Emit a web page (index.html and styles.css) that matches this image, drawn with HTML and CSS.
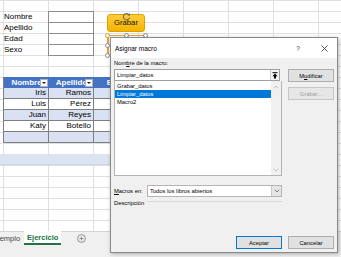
FILE: index.html
```html
<!DOCTYPE html>
<html lang="es">
<head>
  <meta charset="UTF-8" />
  <title>Asignar macro</title>
  <link rel="stylesheet" href="styles.css">
</head>
<body>
  <div class="app">
    <div class="sheet">
      <div class="form">
        <div class="label">Nombre</div><div class="box"></div>
        <div class="label">Apellido</div><div class="box"></div>
        <div class="label">Edad</div><div class="box"></div>
        <div class="label">Sexo</div><div class="box"></div>
      </div>

      <div class="table">
        <div class="th">Nombre<span class="filter"></span></div>
        <div class="th">Apellido<span class="filter"></span></div>
        <div class="th">Edad<span class="filter"></span></div>

        <div class="td band">Iris</div><div class="td band">Ramos</div><div class="td band"></div>
        <div class="td">Luis</div><div class="td">Pérez</div><div class="td"></div>
        <div class="td band">Juan</div><div class="td band">Reyes</div><div class="td band"></div>
        <div class="td">Katy</div><div class="td">Botello</div><div class="td"></div>
        <div class="td band"></div><div class="td band"></div><div class="td band"></div>
      </div>

      <div class="highlight-row"></div>
    </div>

    <div class="tabs">
      <div class="tab first">Ejemplo</div>
      <div class="tab active">Ejercicio</div>
      <div class="add-sheet">
        <svg width="9" height="9" viewBox="0 0 9 9">
          <circle cx="4.5" cy="4.5" r="3.9" fill="none" stroke="#7a7a7a" stroke-width="0.8"/>
          <path d="M4.5 2.5v4M2.5 4.5h4" stroke="#7a7a7a" stroke-width="0.8"/>
        </svg>
      </div>
    </div>
    <div class="status"></div>

    <!-- shapes on the sheet -->
    <div class="shape grabar">Grabar</div>
    <div class="selection">
      <span class="handle h1"></span>
      <span class="handle h2"></span>
      <span class="handle h3"></span>
      <span class="handle h4"></span>
      <span class="handle h5"></span>
    </div>
    <svg class="rotate" width="9" height="9" viewBox="0 0 9 9">
      <path d="M7.4 3.2A3.2 3.2 0 1 0 7.6 5.6" fill="none" stroke="#6d6d6d" stroke-width="1.1"/>
      <path d="M8.2 1.2 7.8 4 5.3 3z" fill="#6d6d6d"/>
    </svg>

    <div class="dialog">
      <div class="titlebar">
        <span class="title">Asignar macro</span>
        <span class="tb-btn">?</span>
        <span class="tb-btn">
          <svg width="7" height="7" viewBox="0 0 7 7">
            <path d="M0.5 0.5l6 6M6.5 0.5l-6 6" stroke="#333" stroke-width="0.8"/>
          </svg>
        </span>
      </div>

      <div class="dlg-body">
        <div class="dlg-main">
          <div class="field-label">Nom<u>b</u>re de la macro:</div>
          <div class="name-box">
            <span class="name-text">Limpiar_datos</span>
            <span class="collapse">
              <svg width="6" height="7" viewBox="0 0 6 7">
                <path d="M0.5 0.7h5" stroke="#000" stroke-width="1"/>
                <path d="M3 1.4 5.6 4.2H4V6.6H2V4.2H0.4z" fill="#000"/>
              </svg>
            </span>
          </div>
          <div class="list">
            <div class="items">
              <div class="item">Grabar_datos</div>
              <div class="item selected">Limpiar_datos</div>
              <div class="item">Macro2</div>
            </div>
            <div class="scroll">
              <svg width="6" height="4" viewBox="0 0 6 4"><path d="M0.8 3.2 3 1 5.2 3.2" fill="none" stroke="#b5b5b5" stroke-width="0.8"/></svg>
              <svg width="6" height="4" viewBox="0 0 6 4"><path d="M0.8 0.8 3 3 5.2 0.8" fill="none" stroke="#b5b5b5" stroke-width="0.8"/></svg>
            </div>
          </div>

          <div class="combo-row">
            <span class="combo-label"><u>M</u>acros en:</span>
            <div class="combo">
              <span class="combo-text">Todos los libros abiertos</span>
              <span class="combo-arrow">
                <svg width="6" height="4" viewBox="0 0 6 4"><path d="M0.8 0.8 3 3 5.2 0.8" fill="none" stroke="#606060" stroke-width="0.8"/></svg>
              </span>
            </div>
          </div>

          <div class="desc-row">
            <span>Descripción</span>
            <span class="rule"></span>
          </div>
        </div>

        <div class="dlg-side">
          <button class="btn">M<u>o</u>dificar</button>
          <button class="btn" disabled>Grabar...</button>
        </div>
      </div>

      <div class="dlg-footer">
        <button class="btn default">Aceptar</button>
        <button class="btn">Cancelar</button>
      </div>
    </div>
  </div>
</body>
</html>
```

FILE: styles.css
```css
html, body {
  margin: 0;
  padding: 0;
  background: #fff;
}

.app {
  position: relative;
  width: 341px;
  height: 257px;
  overflow: hidden;
  font-family: 'Liberation Sans', Arial, sans-serif;
}

/* ---------- worksheet ---------- */

.sheet {
  display: grid;
  grid-template-columns: 3px repeat(7, 45px);
  grid-template-rows: repeat(21, 11px);
  height: 231px;
  background-color: #fff;
  background-image:
    linear-gradient(to right, #e0e0e0 1px, transparent 1px),
    linear-gradient(to bottom, #e0e0e0 1px, transparent 1px);
  background-size: 45px 11px;
  background-position: 3px 0, 0 0;
  font-size: 8px;
  color: #000;
}

.form {
  grid-column: 2 / span 2;
  grid-row: 2 / span 4;
  display: grid;
  grid-template-columns: 45px 45px;
  grid-auto-rows: 11px;
}

.form .label {
  padding-left: 1px;
  line-height: 11px;
}

.form .box {
  border: 1px solid #8c8c8c;
  margin-bottom: -1px;
  margin-right: -1px;
}

.table {
  grid-column: 2 / span 3;
  grid-row: 8 / span 6;
  justify-self: start;
  display: grid;
  grid-template-columns: repeat(3, 45px);
  grid-auto-rows: 11px;
  border-left: 1px solid #7f7f7f;
}

.th {
  position: relative;
  background: #4472c4;
  color: #fff;
  font-weight: bold;
  line-height: 11px;
  text-align: center;
  white-space: nowrap;
  overflow: hidden;
}

.filter {
  position: absolute;
  right: 1px;
  top: 2px;
  width: 6px;
  height: 6px;
  background: #fff;
  border: 1px solid #b0b0b0;
}

.filter::after {
  content: "";
  position: absolute;
  left: 1px;
  top: 2px;
  border-left: 2px solid transparent;
  border-right: 2px solid transparent;
  border-top: 2px solid #222;
}

.td {
  background: #fff;
  border-right: 1px solid #7f7f7f;
  border-bottom: 1px solid #7f7f7f;
  text-align: right;
  padding-right: 2px;
  line-height: 10px;
}

.td.band {
  background: #d9e1f2;
}

.highlight-row {
  grid-column: 1 / -1;
  grid-row: 15;
  background: #dce4f2;
  border-bottom: 1px solid #c9d5ea;
}

/* ---------- sheet tabs ---------- */

.tabs {
  display: flex;
  height: 14px;
  background: #f0f0f0;
  border-top: 1px solid #d4d4d4;
  box-sizing: border-box;
  font-size: 7.5px;
}

.tab {
  display: flex;
  align-items: center;
  padding: 0 4px;
  color: #444;
  white-space: nowrap;
}

.tab.first {
  margin-left: -11px;
}

.tab.active {
  margin-top: -1px;
  padding: 0 3px;
  background: #fff;
  color: #217346;
  font-weight: bold;
  border-bottom: 2px solid #217346;
}

.add-sheet {
  display: flex;
  align-items: center;
  margin-left: 16px;
}

.status {
  height: 12px;
  background: #f0f0f0;
}

/* ---------- shapes ---------- */

.shape {
  position: absolute;
  box-sizing: border-box;
  border-radius: 3px;
  border: 1px solid #d9a200;
  background: linear-gradient(#ffcd3a, #f4b400);
}

.grabar {
  left: 107px;
  top: 14px;
  width: 38px;
  height: 18px;
  font-size: 7.7px;
  line-height: 16px;
  text-align: center;
  color: #111;
}

.selection {
  position: absolute;
  left: 107px;
  top: 35px;
  width: 38px;
  height: 20px;
  border-top: 1px solid #e6a33a;
  border-left: 2px solid #e6a33a;
  box-sizing: border-box;
}

.handle {
  position: absolute;
  width: 5px;
  height: 5px;
  border-radius: 50%;
  border: 1px solid #8a8a8a;
  background: #fff;
  box-sizing: border-box;
}

.h1 { left: -4px; top: -3px; border-color: #d99a2b; }
.h2 { left: 15px; top: -3px; }
.h3 { left: 34px; top: -3px; }
.h4 { left: -4px; top: 7px; }
.h5 { left: -4px; top: 17px; }

.rotate {
  position: absolute;
  left: 122px;
  top: 12px;
}

/* ---------- dialog ---------- */

.dialog {
  position: absolute;
  left: 110px;
  top: 37px;
  width: 228px;
  height: 216px;
  box-sizing: border-box;
  display: flex;
  flex-direction: column;
  background: #f0f0f0;
  border: 1px solid #8a8a8a;
  box-shadow: 1px 1px 4px rgba(0, 0, 0, 0.3);
  font-size: 5.8px;
  color: #000;
}

.titlebar {
  display: flex;
  align-items: center;
  height: 20px;
  background: #fff;
}

.title {
  flex: 1;
  padding-left: 4px;
  font-size: 6.5px;
}

.tb-btn {
  width: 26px;
  display: flex;
  justify-content: center;
  align-items: center;
  font-size: 6.5px;
  color: #333;
}

.dlg-body {
  display: grid;
  grid-template-columns: 168px 46px;
  column-gap: 6px;
  padding: 2px 3px 0;
}

.field-label {
  line-height: 7px;
}

.name-box {
  display: flex;
  align-items: stretch;
  width: 166px;
  height: 12px;
  margin-top: 2px;
  box-sizing: border-box;
  background: #fff;
  border: 1px solid #a0a0a0;
}

.name-text {
  flex: 1;
  padding-left: 2px;
  line-height: 10px;
}

.collapse {
  width: 8px;
  display: flex;
  justify-content: center;
  align-items: center;
  border-left: 1px solid #c8c8c8;
  background: #f4f4f4;
}

.list {
  display: flex;
  height: 95px;
  box-sizing: border-box;
  background: #fff;
  border: 1px solid #b4b4b4;
  border-top: none;
}

.items {
  flex: 1;
  padding-top: 1px;
}

.item {
  line-height: 8px;
  padding-left: 2px;
  white-space: nowrap;
}

.item.selected {
  background: #0078d7;
  color: #fff;
}

.scroll {
  width: 10px;
  display: flex;
  flex-direction: column;
  justify-content: space-between;
  align-items: center;
  padding: 4px 0 3px;
  background: #f0f0f0;
}

.combo-row {
  display: flex;
  align-items: center;
  margin-top: 9px;
}

.combo-label {
  width: 33px;
}

.combo {
  flex: 1;
  display: flex;
  height: 12px;
  box-sizing: border-box;
  background: #fff;
  border: 1px solid #b4b4b4;
}

.combo-text {
  flex: 1;
  padding-left: 2px;
  line-height: 10px;
}

.combo-arrow {
  width: 9px;
  display: flex;
  justify-content: center;
  align-items: center;
  background: #e5e5e5;
  border-left: 1px solid #c8c8c8;
}

.desc-row {
  display: flex;
  align-items: center;
  height: 9px;
  margin-top: 1px;
}

.rule {
  flex: 1;
  height: 1px;
  margin-left: 3px;
  margin-top: -2px;
  background: #d9d9d9;
}

.dlg-side {
  display: flex;
  flex-direction: column;
  gap: 5px;
  padding-top: 9px;
}

.btn {
  width: 46px;
  height: 13px;
  padding: 0;
  margin: 0;
  box-sizing: border-box;
  background: #e1e1e1;
  border: 1px solid #adadad;
  border-radius: 0;
  font-family: inherit;
  font-size: 5.8px;
  color: #000;
}

.btn:disabled {
  background: #e6e6e6;
  border-color: #c6c6c6;
  color: #a0a0a0;
}

.btn.default {
  border-color: #0078d7;
}

.dlg-footer {
  display: flex;
  justify-content: flex-end;
  gap: 6px;
  margin-top: auto;
  padding: 0 3px 3px;
}
```
